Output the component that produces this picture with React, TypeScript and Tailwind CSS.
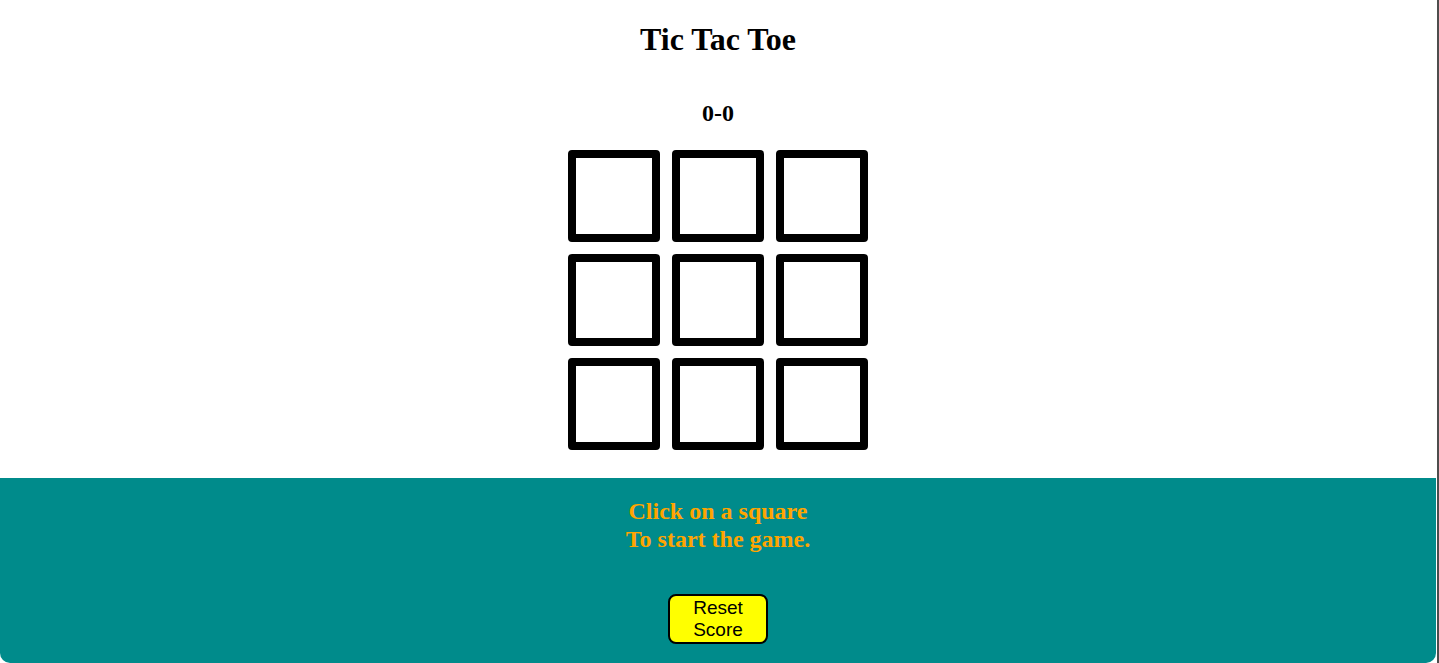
import React from "react";

export default function App() {
  const cells = Array.from({ length: 9 });
  return (
    <div className="w-[1439px] h-[663px] bg-white flex overflow-hidden" style={{ fontFamily: '"Liberation Serif", "Times New Roman", serif' }}>
      <div className="w-[1436px] h-[663px] flex flex-col rounded-b-[10px] overflow-hidden">
        <div className="flex-1 flex flex-col items-center">
          <h1 className="mt-[21px] text-[32px] leading-[37px] font-bold text-black">Tic Tac Toe</h1>
          <h2 className="mt-[41px] text-[24px] leading-[28px] font-bold text-black">0-0</h2>
          <div className="mt-[23px] grid grid-cols-3 gap-[12px]">
            {cells.map((_, i) => (
              <button key={i} className="w-[92px] h-[92px] border-[8px] border-black rounded-[4px] bg-white" />
            ))}
          </div>
        </div>
        <div className="h-[185px] bg-[#008b8b] flex flex-col items-center">
          <h2 className="mt-[20px] text-[24px] leading-[27.5px] font-bold text-[#ffa500] text-center">
            Click on a square
            <br />
            To start the game.
          </h2>
          <button
            className="mt-[41px] w-[100px] border-2 border-black rounded-[8px] bg-[#ffff00] text-black px-[6px] py-px text-[19px] leading-[21.8px]"
            style={{ fontFamily: '"Liberation Sans", Arial, sans-serif' }}
          >
            Reset Score
          </button>
        </div>
      </div>
      <div className="w-px h-[663px]" />
      <div className="w-[2px] h-[663px] bg-[#4d4d4d]" />
    </div>
  );
}
